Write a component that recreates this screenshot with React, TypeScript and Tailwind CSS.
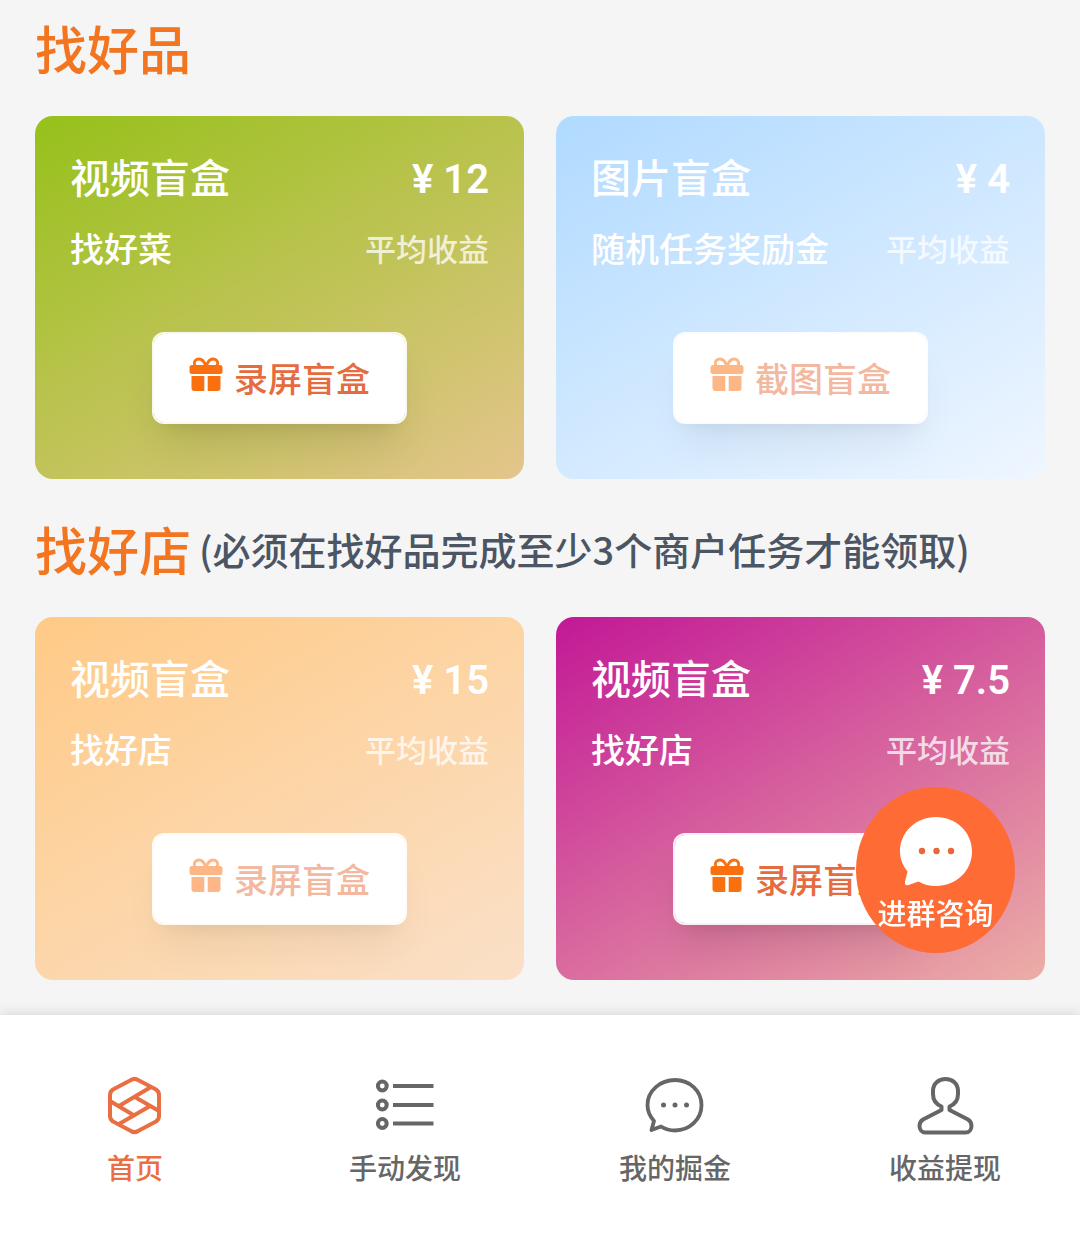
import clsx from "clsx";
import type { ReactNode } from "react";

interface BoxInfo {
  title: string;
  price: string;
  desc: string;
  action: string;
  gradient: string;
  disabled?: boolean;
}

const goodsBoxes: BoxInfo[] = [
  {
    title: "视频盲盒",
    price: "12",
    desc: "找好菜",
    action: "录屏盲盒",
    gradient: "bg-[linear-gradient(150deg,#96c11a,#e4c58c)]",
  },
  {
    title: "图片盲盒",
    price: "4",
    desc: "随机任务奖励金",
    action: "截图盲盒",
    gradient: "bg-[linear-gradient(150deg,#b0daff,#eff6ff)]",
    disabled: true,
  },
];

const shopBoxes: BoxInfo[] = [
  {
    title: "视频盲盒",
    price: "15",
    desc: "找好店",
    action: "录屏盲盒",
    gradient: "bg-[linear-gradient(150deg,#ffca86,#fae0c8)]",
    disabled: true,
  },
  {
    title: "视频盲盒",
    price: "7.5",
    desc: "找好店",
    action: "录屏盲盒",
    gradient: "bg-[linear-gradient(150deg,#c21896,#ecaea6)]",
  },
];

const GiftIcon = ({ className }: { className?: string }) => (
  <svg viewBox="0 0 34 34" className={className} fill="currentColor" aria-hidden="true">
    <path
      d="M17 9.500C15.500 5 13 2 10 2 7 2 5.300 4 5.300 6.300c0 1.200.4 2.200 1.200 3M17 9.500C18.500 5 21 2 24 2 27 2 28.700 4 28.700 6.300c0 1.200-.4 2.200-1.200 3"
      fill="none"
      stroke="currentColor"
      strokeWidth="2.8"
    />
    <rect x="0.500" y="8" width="33" height="9" rx="2.500" />
    <path d="M2.500 19H15.300V34H5.500a3 3 0 0 1-3-3zM18.700 19H31.500V31a3 3 0 0 1-3 3H18.700z" />
  </svg>
);

const HomeIcon = () => (
  <svg viewBox="0 0 60 60" className="size-[60px]" fill="none" stroke="currentColor" strokeWidth="4" strokeLinejoin="round" aria-hidden="true">
    <path d="M26 5Q29.500 2.700 33 5L51 14.500Q54 16.500 54 20V41Q54 44.500 51 46.500L33 56Q29.500 58.300 26 56L8 46.500Q5 44.500 5 41V20Q5 16.500 8 14.500Z" />
    <path d="M5 26L30 41M46 12L14 31M29 21.500L54 36M14 49L46 30.500" />
  </svg>
);

const ListIcon = () => (
  <svg viewBox="0 0 60 60" className="size-[60px]" fill="none" stroke="currentColor" strokeWidth="4" aria-hidden="true">
    <circle cx="7.300" cy="11" r="4.400" />
    <circle cx="7.300" cy="30" r="4.400" />
    <circle cx="7.300" cy="48.500" r="4.400" />
    <path d="M18 11H58.500M18 30H58.500M18 48.500H58.500" />
  </svg>
);

const ChatIcon = () => (
  <svg viewBox="0 0 60 60" className="size-[60px]" aria-hidden="true">
    <path
      d="M30 5C44.500 5 56.500 15.500 56.500 30S44.500 55.500 30 55.500C25 55.500 20 54 16 51.500L6.500 55 9 46C5 41.500 2.500 36 2.500 30 2.500 15.500 15.500 5 30 5Z"
      fill="none"
      stroke="currentColor"
      strokeWidth="3.800"
      strokeLinejoin="round"
    />
    <g fill="currentColor">
      <circle cx="18.500" cy="30" r="2.500" />
      <circle cx="30" cy="30" r="2.500" />
      <circle cx="41.500" cy="30" r="2.500" />
    </g>
  </svg>
);

const UserIcon = () => (
  <svg viewBox="0 0 60 60" className="size-[60px]" fill="none" stroke="currentColor" strokeWidth="4" strokeLinejoin="round" aria-hidden="true">
    <path d="M26.500 31.500C20.500 29 18 24 18 19V16C18 8.500 23.500 4 30.500 4S43 8.500 43 16V19C43 24 40.500 29 34.500 31.500V35L53 44.500C55.500 46 56.500 48 56.500 51 56.500 54.500 54 57.500 50.500 57.500H10.500C7 57.500 4.500 54.500 4.500 51 4.500 48 5.500 46 8 44.500L26.500 35Z" />
  </svg>
);

const BoxCard = ({ title, price, desc, action, gradient, disabled }: BoxInfo) => (
  <article className={clsx("flex flex-col rounded-[18px] px-[35px] pt-[35px] pb-[55px] text-white", gradient)}>
    <div className="flex items-baseline justify-between text-[40px] leading-[50px] font-medium">
      <h3>{title}</h3>
      <p className="font-[Roboto,sans-serif] font-semibold">¥ {price}</p>
    </div>
    <div className="mt-5 flex items-center justify-between leading-[46px] font-medium">
      <p className="text-[34px]">{desc}</p>
      <p className="text-[31px] text-white/75">平均收益</p>
    </div>
    <button
      type="button"
      disabled={disabled}
      className={clsx(
        "mt-[61px] flex items-center gap-[11px] self-center rounded-xl border-2 border-white/90 bg-white bg-clip-padding px-[35px] py-5 text-[34px] leading-[48px] font-medium whitespace-nowrap",
        disabled
          ? "text-[#f3b8a0] shadow-[0_29px_43px_-9px_rgba(0,0,0,0.06),0_12px_17px_-12px_rgba(0,0,0,0.07)]"
          : "text-[#e66c40] shadow-[0_29px_43px_-9px_rgba(0,0,0,0.1),0_12px_17px_-12px_rgba(0,0,0,0.1)]",
      )}
    >
      <span className={clsx("pb-2", disabled ? "text-[#fdb685]" : "text-[#fb700e]")}>
        <GiftIcon className="size-[34px]" />
      </span>
      <span>{action}</span>
    </button>
  </article>
);

const Section = ({ title, note, boxes }: { title: string; note?: string; boxes: BoxInfo[] }) => (
  <section>
    <div className="flex items-center gap-2 leading-[68px] font-medium whitespace-nowrap">
      <h2 className="text-[52px] text-[#f37520]">{title}</h2>
      {note && <p className="text-[38px] text-[#4b5563]">{note}</p>}
    </div>
    <div className="mt-[34px] grid grid-cols-2 gap-8">
      {boxes.map((box) => (
        <BoxCard key={box.title + box.desc + box.price} {...box} />
      ))}
    </div>
  </section>
);

const tabs: { label: string; icon: ReactNode; active?: boolean }[] = [
  { label: "首页", icon: <HomeIcon />, active: true },
  { label: "手动发现", icon: <ListIcon /> },
  { label: "我的掘金", icon: <ChatIcon /> },
  { label: "收益提现", icon: <UserIcon /> },
];

const App = () => {
  return (
    <div className="flex min-h-screen flex-col bg-[#f5f5f5] font-['Noto_Sans_CJK_SC',sans-serif]">
      <main className="flex grow flex-col gap-9 px-[35px] pt-[14px] pb-[35px]">
        <Section title="找好品" boxes={goodsBoxes} />
        <Section title="找好店" note="(必须在找好品完成至少3个商户任务才能领取)" boxes={shopBoxes} />
      </main>

      <button
        type="button"
        className="fixed right-[65px] bottom-[292px] flex h-[166px] w-[159px] flex-col items-center rounded-[50%] bg-[#ff6b35] pt-[30px] text-white"
      >
        <svg viewBox="0 0 72 69" className="h-[69px] w-[72px]" aria-hidden="true">
          <path
            d="M36 0C56 0 72 15 72 34.500S56 69 36 69C29.500 69 23.500 67.500 18.500 64.500L8.500 68C6 69 4.500 67.500 5 65L7.500 54.500C3 49 0 42 0 34.500 0 15 16 0 36 0Z"
            fill="currentColor"
          />
          <g fill="#e8673a">
            <circle cx="22" cy="34" r="3.200" />
            <circle cx="36.500" cy="34" r="3.200" />
            <circle cx="51" cy="34" r="3.200" />
          </g>
        </svg>
        <span className="mt-[6px] text-[29px] leading-10 font-medium whitespace-nowrap">进群咨询</span>
      </button>

      <nav className="sticky bottom-0 grid grid-cols-4 bg-white pt-[60px] pb-[58px] shadow-[0_-2px_12px_rgba(0,0,0,0.12)]">
        {tabs.map((tab) => (
          <a
            key={tab.label}
            href="#"
            className={clsx("flex flex-col items-center gap-3", tab.active ? "text-[#e96f43]" : "text-[#666666]")}
          >
            {tab.icon}
            <span className="text-[28px] leading-10 font-medium">{tab.label}</span>
          </a>
        ))}
      </nav>
    </div>
  );
};

export default App;
